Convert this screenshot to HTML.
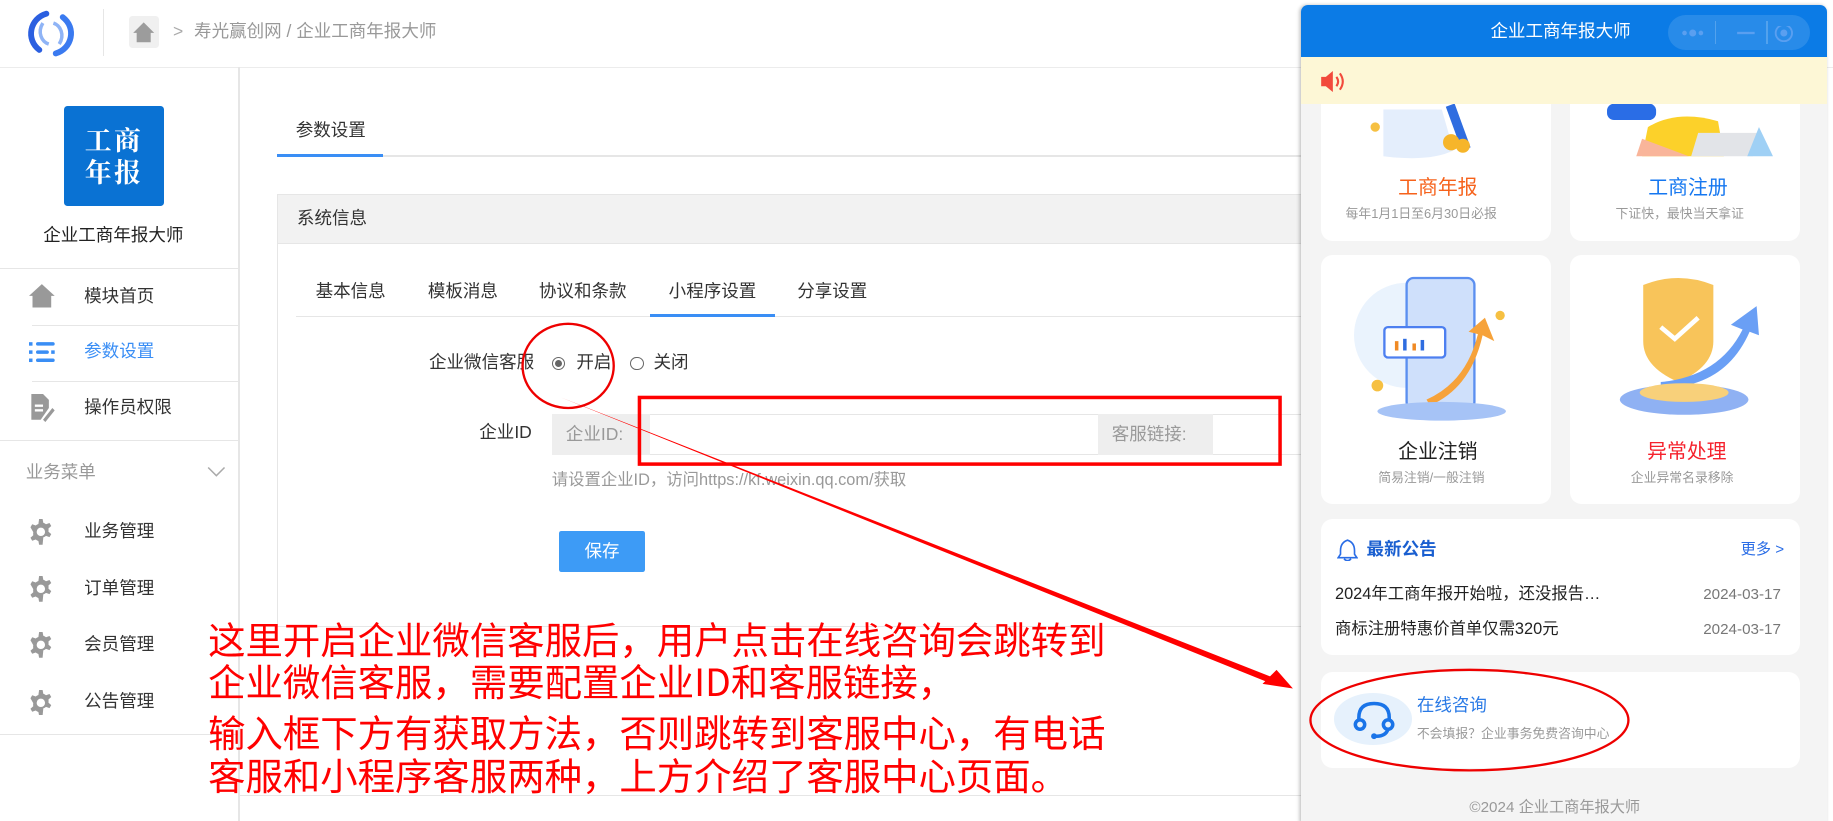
<!DOCTYPE html>
<html><head><meta charset="utf-8">
<style>
html,body{margin:0;padding:0;overflow:hidden;background:#fff}
body{width:1833px;height:821px;position:relative}
#w{position:absolute;left:0;top:0;width:1568px;height:703px;zoom:1.16901;font-family:"Liberation Sans","Noto Sans CJK SC",sans-serif;color:#333}
.a{position:absolute}
.t{position:absolute;white-space:nowrap;line-height:1}
.hl{position:absolute;height:1px;background:#e6e6e6}
.vl{position:absolute;width:1px;background:#e6e6e6}
.gear{position:absolute;width:22px;height:22px}
.card{position:absolute;background:#fff;border-radius:10px}
.rt{position:absolute;left:178px;font-size:32px;line-height:1;color:#f00;white-space:nowrap;font-family:'Noto Sans CJK SC',sans-serif}
</style></head><body><div id="w">
<!-- header -->
<svg class="a" style="left:20px;top:8px" width="48" height="42" viewBox="0 0 48 42"><path d="M20 4 C6 8 2 26 14 35" stroke="#2b5fe0" stroke-width="5" fill="none" stroke-linecap="round"/><path d="M28 38 C42 34 46 16 34 7" stroke="#3a7af0" stroke-width="5" fill="none" stroke-linecap="round"/><path d="M17 12 C12 20 16 28 22 30" stroke="#8fb4f6" stroke-width="3" fill="none"/><path d="M31 30 C36 22 32 14 26 12" stroke="#8fb4f6" stroke-width="3" fill="none"/></svg>
<div class="vl" style="left:88px;top:8px;height:40px"></div>
<div class="a" style="left:110px;top:14px;width:26px;height:27px;background:#f0f0f0;border-radius:3px"></div>
<svg class="a" style="left:113px;top:17px" width="20" height="20" viewBox="0 0 20 20"><path d="M10 2 L19 11 L16 11 L16 19 L4 19 L4 11 L1 11 Z" fill="#9c9c9c"/></svg>
<div class="t" style="left:148px;top:20px;color:#aaa;font-size:15px">&gt;</div>
<div class="t" style="left:166px;top:20px;color:#999;font-size:15px">寿光赢创网 / 企业工商年报大师</div>
<div class="hl" style="left:0;top:57px;width:1568px;background:#ececec"></div>
<!-- sidebar -->
<div class="vl" style="left:204px;top:57px;height:646px"></div>
<div class="a" style="left:55px;top:91px;width:85px;height:85px;background:#0a72d3;border-radius:3px;color:#fff;font-weight:bold;font-size:23px;line-height:28px;text-align:center;padding-top:14px;box-sizing:border-box;font-family:'Noto Serif CJK SC',serif;letter-spacing:2px">工商<br>年报</div>
<div class="t" style="left:37px;top:194px;font-size:15px;color:#222">企业工商年报大师</div>
<div class="hl" style="left:0;top:229px;width:204px"></div>
<svg class="a" style="left:25px;top:242px" width="22" height="22" viewBox="0 0 22 22"><path d="M11 1 L22 11 L19 11 L19 21 L3 21 L3 11 L0 11 Z" fill="#999"/></svg>
<div class="t" style="left:72px;top:246px;font-size:15px">模块首页</div>
<div class="hl" style="left:27px;top:278px;width:177px"></div>
<svg class="a" style="left:25px;top:292px" width="22" height="20" viewBox="0 0 22 20"><g fill="#3a8ef5"><rect x="0" y="1" width="3" height="3"/><rect x="6" y="1" width="16" height="3" rx="1.5"/><rect x="0" y="8" width="3" height="3"/><rect x="6" y="8" width="11" height="3" rx="1.5"/><rect x="19" y="8" width="3" height="3"/><rect x="0" y="15" width="3" height="3"/><rect x="6" y="15" width="16" height="3" rx="1.5"/></g></svg>
<div class="t" style="left:72px;top:293px;font-size:15px;color:#3a8ef5">参数设置</div>
<div class="hl" style="left:27px;top:326px;width:177px"></div>
<svg class="a" style="left:25px;top:337px" width="22" height="24" viewBox="0 0 22 24"><path d="M2 0 H12 L17 5 V12 L10 22 H2 Z" fill="#999"/><path d="M12 22 L20 12 L22 14 L14 24 Z" fill="#999"/><rect x="5" y="9" width="7" height="2" fill="#fff"/><rect x="5" y="13" width="7" height="2" fill="#fff"/></svg>
<div class="t" style="left:72px;top:341px;font-size:15px">操作员权限</div>
<div class="hl" style="left:0;top:376px;width:204px"></div>
<div class="t" style="left:22px;top:397px;font-size:15px;color:#999">业务菜单</div>
<svg class="a" style="left:177px;top:397px" width="16" height="12" viewBox="0 0 16 12"><path d="M1 3 L8 10 L15 3" stroke="#aaa" stroke-width="1.3" fill="none"/></svg>
<svg width="0" height="0" style="position:absolute"><defs><g id="g"><path d="M9.5 0h3l.6 3.2a8 8 0 0 1 2.3 1.3l3-1.1 1.5 2.6-2.4 2.1a8 8 0 0 1 0 2.7l2.4 2.1-1.5 2.6-3-1.1a8 8 0 0 1-2.3 1.3L12.5 22h-3l-.6-3.2a8 8 0 0 1-2.3-1.3l-3 1.1-1.5-2.6 2.4-2.1a8 8 0 0 1 0-2.7L2.1 7.1 3.6 4.5l3 1.1A8 8 0 0 1 8.9 4.3Z" fill="#999"/><circle cx="11" cy="11" r="3.6" fill="#fff"/></g></defs></svg>
<svg class="gear" style="left:24px;top:444px" viewBox="0 0 22 22"><use href="#g"/></svg>
<div class="t" style="left:72px;top:447px;font-size:15px">业务管理</div>
<svg class="gear" style="left:24px;top:493px" viewBox="0 0 22 22"><use href="#g"/></svg>
<div class="t" style="left:72px;top:496px;font-size:15px">订单管理</div>
<svg class="gear" style="left:24px;top:541px" viewBox="0 0 22 22"><use href="#g"/></svg>
<div class="t" style="left:72px;top:544px;font-size:15px">会员管理</div>
<svg class="gear" style="left:24px;top:590px" viewBox="0 0 22 22"><use href="#g"/></svg>
<div class="t" style="left:72px;top:593px;font-size:15px">公告管理</div>
<div class="hl" style="left:0;top:628px;width:204px"></div>
<!-- content -->
<div class="t" style="left:253px;top:104px;font-size:15px">参数设置</div>
<div class="hl" style="left:237px;top:133px;width:900px"></div>
<div class="a" style="left:237px;top:132px;width:91px;height:2px;background:#3a8ef5"></div>
<div class="a" style="left:237px;top:166px;width:900px;height:370px;border:1px solid #e6e6e6;box-sizing:border-box"></div>
<div class="a" style="left:238px;top:167px;width:900px;height:41px;background:#f2f2f2;border-bottom:1px solid #e6e6e6"></div>
<div class="t" style="left:254px;top:180px;font-size:15px">系统信息</div>
<div class="t" style="left:270px;top:242px;font-size:15px">基本信息</div>
<div class="t" style="left:366px;top:242px;font-size:15px">模板消息</div>
<div class="t" style="left:461px;top:242px;font-size:15px">协议和条款</div>
<div class="t" style="left:572px;top:242px;font-size:15px">小程序设置</div>
<div class="t" style="left:682px;top:242px;font-size:15px">分享设置</div>
<div class="hl" style="left:253px;top:270px;width:870px"></div>
<div class="a" style="left:556px;top:269px;width:107px;height:2px;background:#3a8ef5"></div>
<div class="t" style="left:367px;top:303px;font-size:15px">企业微信客服</div>
<div class="a" style="left:472px;top:305px;width:10px;height:10px;border:1px solid #666;border-radius:50%"></div>
<div class="a" style="left:475px;top:308px;width:6px;height:6px;background:#666;border-radius:50%"></div>
<div class="t" style="left:493px;top:303px;font-size:15px">开启</div>
<div class="a" style="left:539px;top:305px;width:10px;height:10px;border:1px solid #666;border-radius:50%"></div>
<div class="t" style="left:559px;top:303px;font-size:15px">关闭</div>
<div class="t" style="left:410px;top:363px;font-size:15px">企业ID</div>
<div class="a" style="left:472px;top:354px;width:700px;height:35px;border:1px solid #e6e6e6;box-sizing:border-box"></div>
<div class="a" style="left:472px;top:354px;width:84px;height:35px;background:#eee"></div>
<div class="t" style="left:484px;top:364px;font-size:15px;color:#999">企业ID:</div>
<div class="a" style="left:939px;top:354px;width:99px;height:35px;background:#eee"></div>
<div class="t" style="left:951px;top:364px;font-size:15px;color:#999">客服链接:</div>
<div class="t" style="left:472px;top:404px;font-size:14px;color:#999">请设置企业ID，访问https://kf.weixin.qq.com/获取</div>
<div class="a" style="left:478px;top:454px;width:74px;height:35px;background:#3d9bf6;border-radius:2px;color:#fff;font-size:15px;line-height:35px;text-align:center">保存</div>
<div class="hl" style="left:204px;top:680px;width:910px"></div>
<!-- annotation text -->
<div class="rt" style="top:530px">这里开启企业微信客服后，用户点击在线咨询会跳转到</div>
<div class="rt" style="top:566px">企业微信客服，需要配置企业ID和客服链接，</div>
<div class="rt" style="top:610px">输入框下方有获取方法，否则跳转到客服中心，有电话</div>
<div class="rt" style="top:647px">客服和小程序客服两种，上方介绍了客服中心页面。</div>
<!-- popup -->
<div class="a" style="left:1113px;top:4px;width:450px;height:700px;background:#f4f4f4;border-radius:6px 6px 0 0;box-shadow:-1px 0 3px rgba(0,0,0,.25);overflow:hidden">
 <!-- cards row1 -->
 <div class="card" style="left:17px;top:-20px;width:197px;height:222px"></div>
 <div class="card" style="left:230px;top:-20px;width:197px;height:222px"></div>
 <svg class="a" style="left:50px;top:75px" width="130" height="60" viewBox="0 0 130 60"><path d="M20 15 L70 15 L80 50 Q60 60 20 55 Z" fill="#e4eefc"/><rect x="80" y="10" width="8" height="40" fill="#2f6de0" transform="rotate(-20 84 30)"/><circle cx="78" cy="43" r="7" fill="#f6b52a"/><circle cx="88" cy="46" r="6" fill="#f6b52a"/><circle cx="13" cy="30" r="4" fill="#f6c042"/></svg>
 <svg class="a" style="left:262px;top:75px" width="150" height="60" viewBox="0 0 150 60"><rect x="0" y="10" width="42" height="14" rx="6" fill="#2a6de6"/><path d="M35 30 Q60 15 95 25 L100 55 L30 55 Z" fill="#fcd12a"/><path d="M30 40 L70 55 L25 55 Z" fill="#f9b59a"/><path d="M78 35 L130 35 L125 55 L72 55 Z" fill="#e2e4e8"/><path d="M130 30 L142 55 L120 55 Z" fill="#9fd0f5"/></svg>
 <div class="t" style="left:83px;top:149px;font-size:17px;color:#f6621b">工商年报</div>
 <div class="t" style="left:38px;top:174px;font-size:11px;color:#999">每年1月1日至6月30日必报</div>
 <div class="t" style="left:297px;top:149px;font-size:17px;color:#1577f0">工商注册</div>
 <div class="t" style="left:269px;top:174px;font-size:11px;color:#999">下证快，最快当天拿证</div>
 <!-- header over cards -->
 <div class="a" style="left:0;top:0;width:450px;height:45px;background:#0b7be6"></div>
 <div class="t" style="left:162px;top:16px;font-size:15px;color:#fff">企业工商年报大师</div>
 <div class="a" style="left:314px;top:9px;width:121px;height:30px;border-radius:15px;background:rgba(255,255,255,.12)"></div>
 <div class="a" style="left:354px;top:14px;width:1px;height:20px;background:rgba(255,255,255,.2)"></div>
 <div class="a" style="left:398px;top:14px;width:1px;height:20px;background:rgba(255,255,255,.2)"></div>
 <svg class="a" style="left:325px;top:18px" width="125" height="14" viewBox="0 0 125 14"><circle cx="3" cy="6" r="2" fill="#5a9ff0"/><circle cx="10" cy="6" r="3" fill="#5a9ff0"/><circle cx="17" cy="6" r="2" fill="#5a9ff0"/><rect x="48" y="5" width="15" height="2" fill="#5a9ff0"/><circle cx="88" cy="6" r="7" stroke="#5a9ff0" stroke-width="1.6" fill="none"/><circle cx="88" cy="6" r="3" fill="#5a9ff0"/></svg>
 <div class="a" style="left:0;top:45px;width:450px;height:40px;background:#fdf7d6"></div>
 <svg class="a" style="left:16px;top:57px" width="22" height="18" viewBox="0 0 22 18"><path d="M1 5 H5 L11 0 V18 L5 13 H1 Z" fill="#f24a3c"/><path d="M14 5 Q17 9 14 13" stroke="#f24a3c" stroke-width="1.8" fill="none"/><path d="M17 2 Q22 9 17 16" stroke="#f24a3c" stroke-width="1.8" fill="none"/></svg>
 <!-- row2 -->
 <div class="card" style="left:17px;top:214px;width:197px;height:213px"></div>
 <div class="card" style="left:230px;top:214px;width:197px;height:213px"></div>
 <svg class="a" style="left:45px;top:228px" width="145" height="135" viewBox="0 0 145 135"><circle cx="45" cy="55" r="45" fill="#eaf3fd"/><rect x="45" y="6" width="58" height="112" rx="6" fill="#cfe0fb" stroke="#5b8ff0" stroke-width="2"/><rect x="26" y="48" width="52" height="26" rx="3" fill="#fff" stroke="#4d7ff0" stroke-width="2"/><rect x="35" y="60" width="3" height="8" fill="#f08a24"/><rect x="42" y="58" width="3" height="10" fill="#2f6de0"/><rect x="50" y="62" width="3" height="6" fill="#f08a24"/><rect x="57" y="59" width="3" height="9" fill="#2f6de0"/><path d="M65 115 Q100 100 110 55 L120 60 L112 40 L98 52 L106 54 Q96 95 62 110 Z" fill="#f6a23a"/><ellipse cx="75" cy="120" rx="55" ry="8" fill="#a6c3f6"/><circle cx="20" cy="98" r="5" fill="#f6c042"/><circle cx="125" cy="38" r="4" fill="#f6c042"/></svg>
 <svg class="a" style="left:268px;top:228px" width="140" height="135" viewBox="0 0 140 135"><path d="M25 12 Q55 0 85 12 L85 60 Q85 82 55 95 Q25 82 25 60 Z" fill="#f8c45a"/><path d="M40 48 L52 58 L72 40" stroke="#fff" stroke-width="4" fill="none"/><path d="M40 95 Q90 90 110 50 L100 46 L122 30 L124 55 L116 52 Q95 100 40 100 Z" fill="#6a9ff5"/><ellipse cx="60" cy="110" rx="55" ry="13" fill="#8fb1f3"/><ellipse cx="60" cy="104" rx="38" ry="8" fill="#f8d07a"/></svg>
 <div class="t" style="left:83px;top:375px;font-size:17px;color:#222">企业注销</div>
 <div class="t" style="left:66px;top:400px;font-size:11px;color:#999">简易注销/一般注销</div>
 <div class="t" style="left:296px;top:375px;font-size:17px;color:#f5222d">异常处理</div>
 <div class="t" style="left:282px;top:400px;font-size:11px;color:#999">企业异常名录移除</div>
 <!-- notice -->
 <div class="card" style="left:17px;top:440px;width:410px;height:116px"></div>
 <svg class="a" style="left:31px;top:457px" width="18" height="19" viewBox="0 0 18 19"><path d="M9 1 Q3 3 3 10 L3 13 L1 16 H17 L15 13 L15 10 Q15 3 9 1Z" stroke="#2a6de6" stroke-width="1.4" fill="none"/><path d="M6 17 Q9 20 12 17" stroke="#2a6de6" stroke-width="1.4" fill="none"/></svg>
 <div class="t" style="left:56px;top:459px;font-size:15px;font-weight:bold;color:#1a5fd0">最新公告</div>
 <div class="t" style="left:376px;top:460px;font-size:13px;color:#2a6de6">更多 &gt;</div>
 <div class="t" style="left:29px;top:497px;font-size:14px;color:#222">2024年工商年报开始啦，还没报告…</div>
 <div class="t" style="left:344px;top:498px;font-size:13px;color:#777">2024-03-17</div>
 <div class="t" style="left:29px;top:527px;font-size:14px;color:#222">商标注册特惠价首单仅需320元</div>
 <div class="t" style="left:344px;top:528px;font-size:13px;color:#777">2024-03-17</div>
 <!-- consult -->
 <div class="card" style="left:17px;top:571px;width:410px;height:82px"></div>
 <div class="a" style="left:28px;top:589px;width:67px;height:44px;border-radius:50%;background:#e6f1fc"></div>
 <svg class="a" style="left:44px;top:595px" width="36" height="34" viewBox="0 0 36 34"><path d="M5 20 V15 Q5 3 18 3 Q31 3 31 15 V20" stroke="#1a74e8" stroke-width="3" fill="none"/><circle cx="6" cy="21" r="4" stroke="#1a74e8" stroke-width="3" fill="#e6f1fc"/><circle cx="30" cy="21" r="4" stroke="#1a74e8" stroke-width="3" fill="#e6f1fc"/><path d="M30 25 Q28 31 20 31" stroke="#1a74e8" stroke-width="3" fill="none"/><circle cx="18" cy="31" r="2.5" fill="#1a74e8"/></svg>
 <div class="t" style="left:99px;top:592px;font-size:15px;color:#2a7ae6">在线咨询</div>
 <div class="t" style="left:99px;top:619px;font-size:11px;color:#999">不会填报？企业事务免费咨询中心</div>
 <div class="t" style="left:144px;top:680px;font-size:13px;color:#999">©2024 企业工商年报大师</div>
</div>
<!-- annotations svg -->
<svg class="a" style="left:0;top:0" width="1568" height="703" viewBox="0 0 1568 703">
 <ellipse cx="486" cy="313" rx="39" ry="36" stroke="#e00" stroke-width="2" fill="none"/>
 <rect x="547" y="340" width="548" height="57" stroke="#f00" stroke-width="3" fill="none"/>
 <polygon points="480,340 1090,580 1088,585" fill="#f00"/>
 <polygon points="1106,589 1080,585 1092,573" fill="#f00"/>
 <ellipse cx="1257" cy="616" rx="136" ry="43" stroke="#e00" stroke-width="2" fill="none"/>
</svg>
</div></body></html>
